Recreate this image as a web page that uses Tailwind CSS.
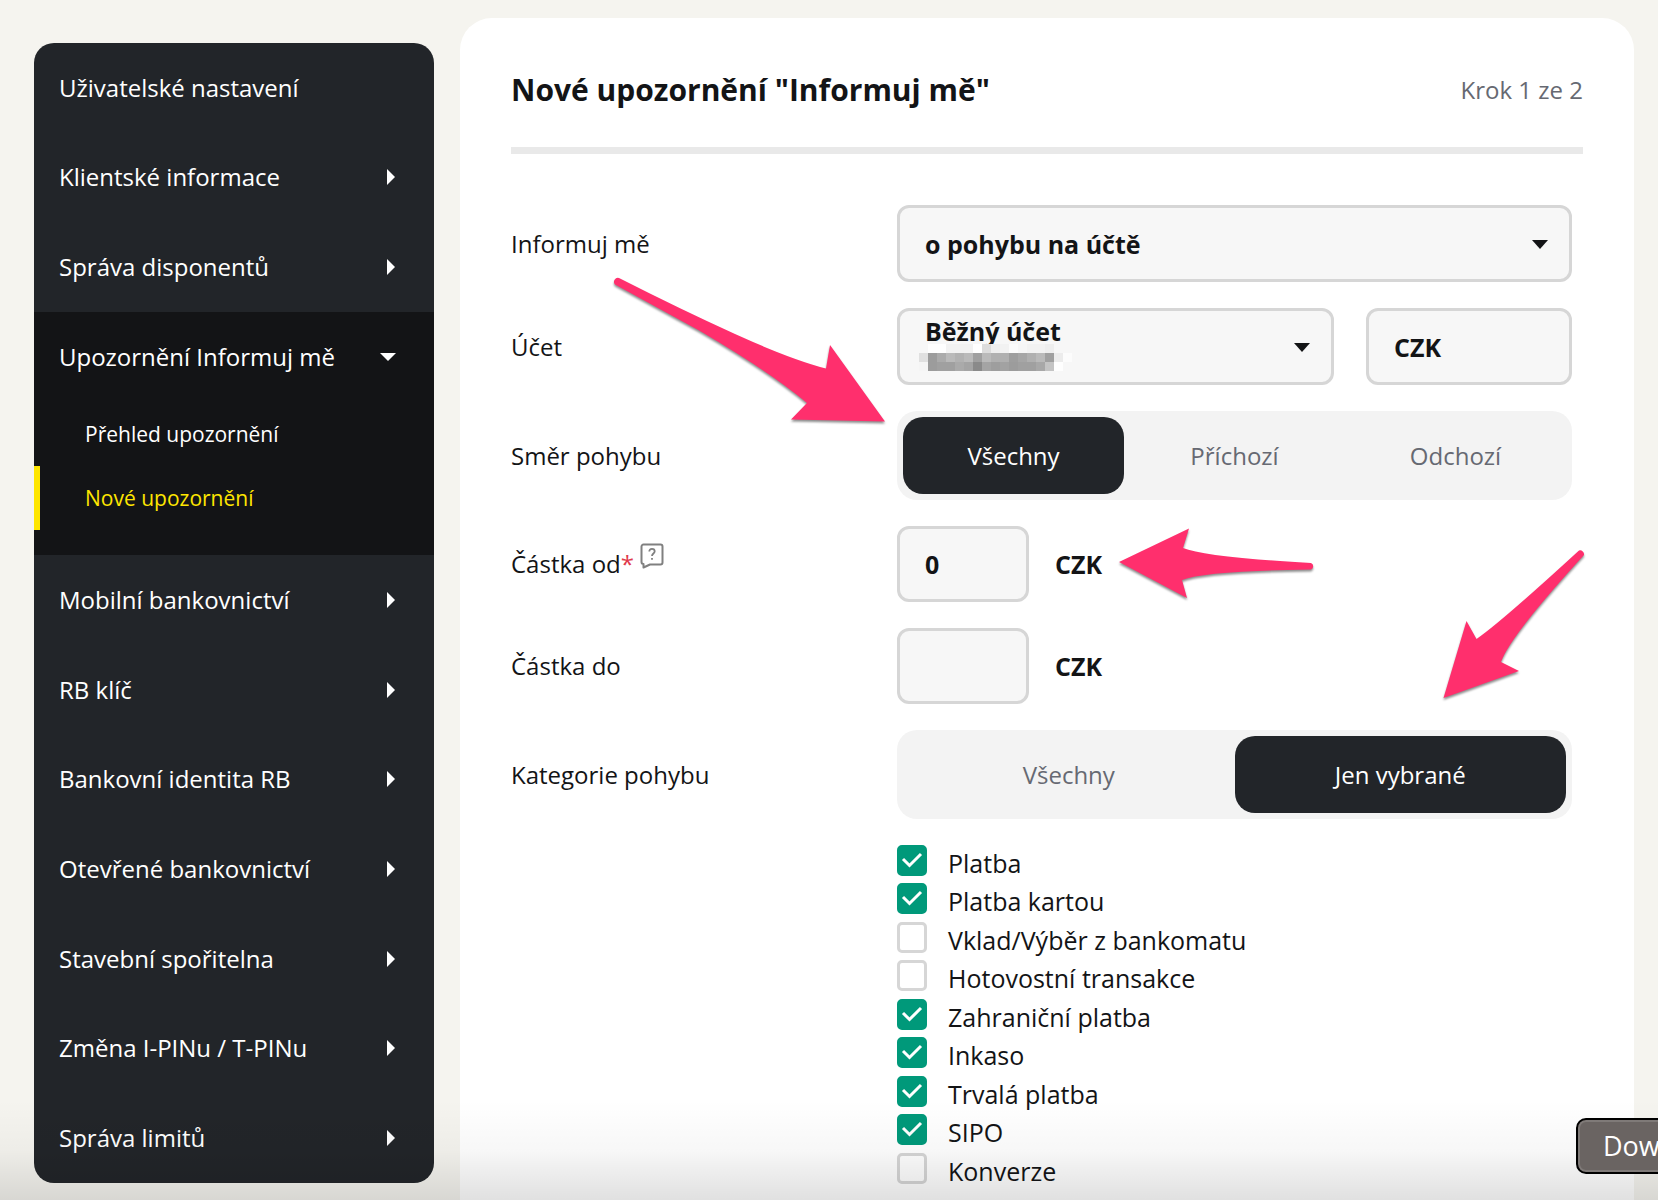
<!DOCTYPE html>
<html lang="cs">
<head>
  <meta charset="UTF-8">
  <meta name="viewport" content="width=device-width, initial-scale=1.0">
  <title>Nové upozornění "Informuj mě"</title>
  <script src="https://cdn.jsdelivr.net/npm/@tailwindcss/browser@4"></script>
</head>
<body class="relative min-h-screen overflow-x-hidden bg-[#f5f4ef] font-['Open_Sans',sans-serif] text-[24px] leading-9 text-[#131416]">

<div class="flex min-h-screen pl-[34px] pr-6 gap-[26px]">

  <!-- Sidebar -->
  <nav class="mt-[43px] w-[400px] shrink-0 self-start overflow-hidden rounded-[20px] bg-[#222529] font-medium text-white">
    <ul class="grid min-h-[269px] auto-rows-fr">
      <li class="flex"><a href="#" class="flex flex-1 items-center px-[25px]">Uživatelské nastavení</a></li>
      <li class="flex"><a href="#" class="flex flex-1 items-center justify-between pl-[25px] pr-[39px]">Klientské informace <svg class="h-4 w-2" viewBox="0 0 8 16" fill="currentColor"><path d="M0 0l8 8-8 8z"/></svg></a></li>
      <li class="flex"><a href="#" class="flex flex-1 items-center justify-between pl-[25px] pr-[39px]">Správa disponentů <svg class="h-4 w-2" viewBox="0 0 8 16" fill="currentColor"><path d="M0 0l8 8-8 8z"/></svg></a></li>
    </ul>

    <div class="bg-[#131416] pb-[25px]">
      <a href="#" class="flex h-[90px] items-center justify-between pl-[25px] pr-[38px]">Upozornění Informuj mě <svg class="h-2 w-4" viewBox="0 0 16 8" fill="currentColor"><path d="M0 0h16L8 8z"/></svg></a>
      <ul class="text-[21px]">
        <li><a href="#" class="flex h-16 items-center border-l-6 border-transparent pl-[45px]">Přehled upozornění</a></li>
        <li><a href="#" class="flex h-16 items-center border-l-6 border-[#fee600] pl-[45px] text-[#fee600]">Nové upozornění</a></li>
      </ul>
    </div>

    <ul class="grid min-h-[628px] auto-rows-fr">
      <li class="flex"><a href="#" class="flex flex-1 items-center justify-between pl-[25px] pr-[39px]">Mobilní bankovnictví <svg class="h-4 w-2" viewBox="0 0 8 16" fill="currentColor"><path d="M0 0l8 8-8 8z"/></svg></a></li>
      <li class="flex"><a href="#" class="flex flex-1 items-center justify-between pl-[25px] pr-[39px]">RB klíč <svg class="h-4 w-2" viewBox="0 0 8 16" fill="currentColor"><path d="M0 0l8 8-8 8z"/></svg></a></li>
      <li class="flex"><a href="#" class="flex flex-1 items-center justify-between pl-[25px] pr-[39px]">Bankovní identita RB <svg class="h-4 w-2" viewBox="0 0 8 16" fill="currentColor"><path d="M0 0l8 8-8 8z"/></svg></a></li>
      <li class="flex"><a href="#" class="flex flex-1 items-center justify-between pl-[25px] pr-[39px]">Otevřené bankovnictví <svg class="h-4 w-2" viewBox="0 0 8 16" fill="currentColor"><path d="M0 0l8 8-8 8z"/></svg></a></li>
      <li class="flex"><a href="#" class="flex flex-1 items-center justify-between pl-[25px] pr-[39px]">Stavební spořitelna <svg class="h-4 w-2" viewBox="0 0 8 16" fill="currentColor"><path d="M0 0l8 8-8 8z"/></svg></a></li>
      <li class="flex"><a href="#" class="flex flex-1 items-center justify-between pl-[25px] pr-[39px]">Změna I-PINu / T-PINu <svg class="h-4 w-2" viewBox="0 0 8 16" fill="currentColor"><path d="M0 0l8 8-8 8z"/></svg></a></li>
      <li class="flex"><a href="#" class="flex flex-1 items-center justify-between pl-[25px] pr-[39px]">Správa limitů <svg class="h-4 w-2" viewBox="0 0 8 16" fill="currentColor"><path d="M0 0l8 8-8 8z"/></svg></a></li>
    </ul>
  </nav>

  <!-- Form -->
  <main class="mt-[18px] min-w-0 flex-1 rounded-t-[32px] bg-white px-[51px]">
    <header class="flex h-[136px] items-center justify-between border-b-7 border-[#e9e9e9] pt-[14px]">
      <h1 class="text-[30px] leading-9 font-bold">Nové upozornění "Informuj mě"</h1>
      <p class="text-[#666972]">Krok 1 ze 2</p>
    </header>

    <form class="space-y-[26px] pt-[51px] pr-[11px]">
      <div class="grid grid-cols-[386px_1fr] items-center">
        <label for="typ">Informuj mě</label>
        <div class="relative">
          <select id="typ" class="block h-[77px] w-full appearance-none rounded-xl border-3 border-[#d6d6d6] bg-[#f7f7f7] pl-[25px] text-[25px] font-bold">
            <option>o pohybu na účtě</option>
          </select>
          <svg class="pointer-events-none absolute top-1/2 right-6 -mt-1 h-[9px] w-4" viewBox="0 0 16 9" fill="currentColor"><path d="M0 0h16L8 9z"/></svg>
        </div>
      </div>

      <div class="grid grid-cols-[386px_1fr] items-center">
        <label for="ucet">Účet</label>
        <div class="flex gap-8">
          <div class="relative flex-1">
            <select id="ucet" class="block h-[77px] w-full appearance-none rounded-xl border-3 border-[#d6d6d6] bg-[#f7f7f7] pb-8 pl-[25px] text-[25px] font-bold">
              <option>Běžný účet</option>
            </select>
            <!-- masked account number -->
            <svg class="pointer-events-none absolute bottom-[14px] left-[22px] h-[27px] w-[153px]" viewBox="0 0 17 3" preserveAspectRatio="none" shape-rendering="crispEdges">
              <g id="mask"></g>
            </svg>
            <svg class="pointer-events-none absolute top-1/2 right-6 -mt-1 h-[9px] w-4" viewBox="0 0 16 9" fill="currentColor"><path d="M0 0h16L8 9z"/></svg>
          </div>
          <input type="text" value="CZK" readonly aria-label="Měna" class="h-[77px] w-[206px] rounded-xl border-3 border-[#d6d6d6] bg-[#f7f7f7] px-[25px] text-[25px] font-bold">
        </div>
      </div>

      <div class="grid grid-cols-[386px_1fr] items-center">
        <span>Směr pohybu</span>
        <div class="grid grid-cols-3 rounded-[20px] bg-[#f3f3f3] p-[6px]">
          <button type="button" class="h-[77px] rounded-[20px] bg-[#222529] text-white">Všechny</button>
          <button type="button" class="h-[77px] rounded-[20px] text-[#666972]">Příchozí</button>
          <button type="button" class="h-[77px] rounded-[20px] text-[#666972]">Odchozí</button>
        </div>
      </div>

      <div class="grid grid-cols-[386px_1fr] items-center">
        <div class="flex items-center">
          <label for="castka-od">Částka od<span class="text-[#e0394c]">*</span></label>
          <button type="button" aria-label="Nápověda" class="mb-4 ml-[6px]">
            <svg class="h-[26px] w-6" viewBox="0 0 24 26" fill="none" stroke="#808080" stroke-width="2" stroke-linejoin="round">
              <path d="M3.500 1.500h17a2 2 0 0 1 2 2v16a2 2 0 0 1-2 2H10L3.500 24.500v-3.500a2 2 0 0 1-2-2V3.500a2 2 0 0 1 2-2z"/>
              <path stroke-width="1.800" d="M9.300 8.500c0-1.600 1-2.700 2.700-2.700s2.700 1 2.700 2.500c0 2.200-2.700 2.200-2.700 4.700M12 15v1.800"/>
            </svg>
          </button>
        </div>
        <div class="flex items-center gap-[26px] text-[25px] font-bold">
          <input id="castka-od" type="text" value="0" class="h-[76px] w-[132px] rounded-xl border-3 border-[#d6d6d6] bg-[#f7f7f7] px-[25px]">
          <span>CZK</span>
        </div>
      </div>

      <div class="grid grid-cols-[386px_1fr] items-center">
        <label for="castka-do">Částka do</label>
        <div class="flex items-center gap-[26px] text-[25px] font-bold">
          <input id="castka-do" type="text" class="h-[76px] w-[132px] rounded-xl border-3 border-[#d6d6d6] bg-[#f7f7f7] px-[25px]">
          <span>CZK</span>
        </div>
      </div>

      <div class="grid grid-cols-[386px_1fr] items-center">
        <span>Kategorie pohybu</span>
        <div class="grid grid-cols-2 rounded-[20px] bg-[#f3f3f3] p-[6px]">
          <button type="button" class="h-[77px] rounded-[20px] text-[#666972]">Všechny</button>
          <button type="button" class="h-[77px] rounded-[20px] bg-[#222529] text-white">Jen vybrané</button>
        </div>
      </div>

      <ul id="kategorie" class="ml-[386px] grid min-h-[346px] auto-rows-fr text-[25px]"></ul>
    </form>
  </main>
</div>

<!-- Shade along the lower edge -->
<div class="pointer-events-none absolute inset-x-0 bottom-0 h-[100px] bg-linear-to-b from-transparent via-black/3 to-black/12"></div>

<button type="button" aria-label="Download" class="absolute -right-3 bottom-[26px] h-14 w-[94px] rounded-[10px] border-2 border-black bg-[#6a6462] pl-[25px] text-left text-[27px] text-white inset-ring-2 inset-ring-[#7f7a78]">Dow</button>

<!-- Annotation arrows -->
<svg class="pointer-events-none absolute top-0 left-0 h-[1200px] w-[1658px] drop-shadow-[0_2px_1px_rgba(0,0,0,0.45)]" viewBox="0 0 1658 1200" fill="#ff2f6d">
  <path d="M619 278Q680 309 735 334Q790 359 826 368.500L830 345L885 421.500L791 419.500L807 403Q770 372 700 331L615 284.500A4 4 0 0 1 619 278z"/>
  <path d="M1119 562L1189 528.500L1183 548Q1205 557 1311 563A3.500 3.500 0 0 1 1311 569.500Q1205 571 1182 580L1187 598z"/>
  <path d="M1443.500 698L1466.500 621L1476.500 639Q1500 623 1579 550.500A4 4 0 0 1 1584 555Q1510 636 1501 662L1519 671z"/>
</svg>

<script>
const categories = [
  ["Platba", true],
  ["Platba kartou", true],
  ["Vklad/Výběr z bankomatu", false],
  ["Hotovostní transakce", false],
  ["Zahraniční platba", true],
  ["Inkaso", true],
  ["Trvalá platba", true],
  ["SIPO", true],
  ["Konverze", false]
];

const list = document.getElementById("kategorie");
categories.forEach(([name, checked], i) => {
  const li = document.createElement("li");
  li.className = "flex items-start";
  li.innerHTML = `
    <span class="relative h-[31px] w-[30px] shrink-0">
      <input type="checkbox" id="kat-${i}" ${checked ? "checked" : ""} class="peer block h-[31px] w-[30px] appearance-none rounded-[5px] border-3 border-[#d6d6d6] bg-white checked:border-[#00997a] checked:bg-[#00997a]">
      <svg class="pointer-events-none absolute inset-0 hidden h-[31px] w-[30px] peer-checked:block" viewBox="0 0 30 31" fill="none" stroke="#fff" stroke-width="3"><path d="M6 14l6.500 6.500L24 9"/></svg>
    </span>
    <label for="kat-${i}" class="pl-[21px]">${name}</label>`;
  list.appendChild(li);
});

// grey levels of the masked account number, row by row
const mask = [
  [247, 254, 254, 242, 242, 242, 255, 220, 238, 242, 251, 246, 242, 242, 238, 247, 247],
  [224, 156, 171, 186, 178, 186, 160, 186, 176, 176, 158, 166, 176, 186, 160, 236, 252],
  [245, 156, 160, 160, 170, 164, 138, 164, 158, 162, 156, 160, 160, 168, 196, 254, 247]
];
document.getElementById("mask").innerHTML = mask.map((row, y) =>
  row.map((v, x) => `<rect x="${x}" y="${y}" width="1" height="1" fill="rgb(${v},${v},${v})"/>`).join("")
).join("");
</script>
</body>
</html>
